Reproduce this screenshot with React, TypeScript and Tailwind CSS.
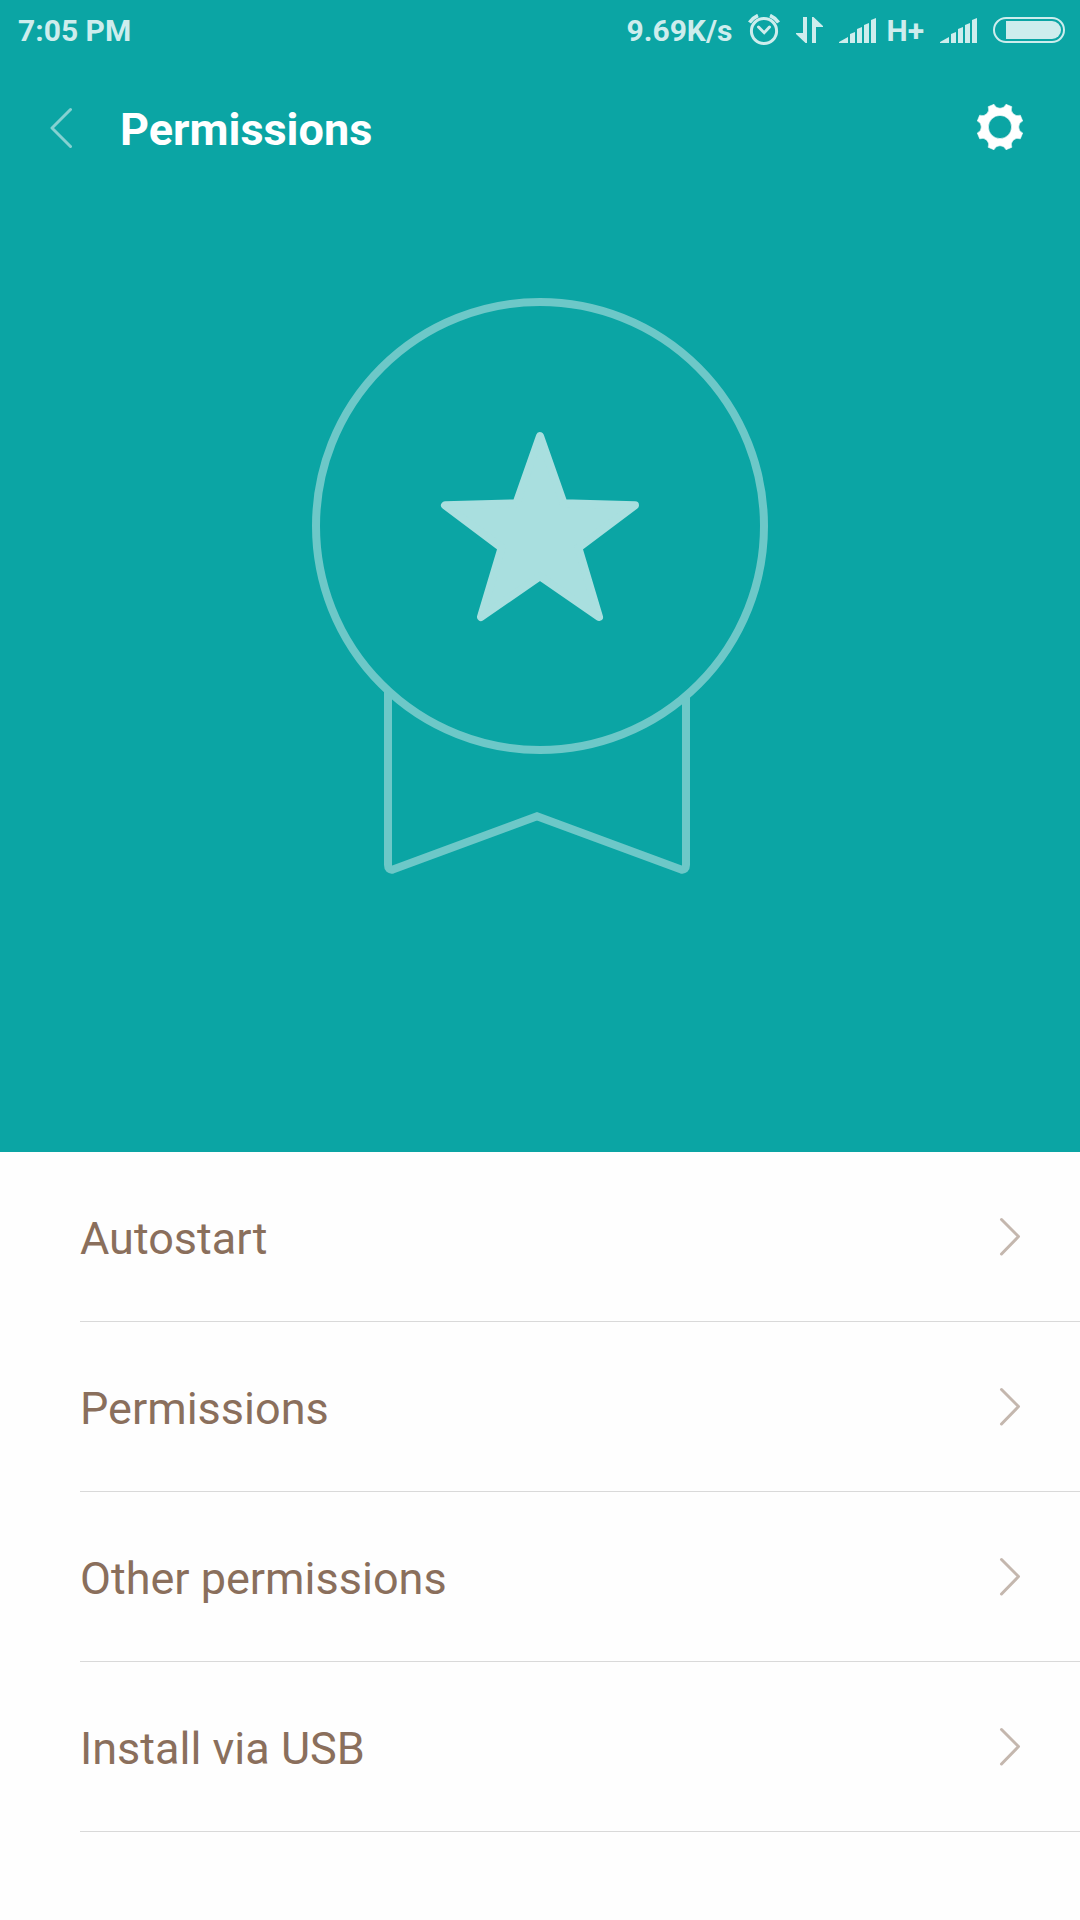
const menuItems = [
  { label: "Autostart", href: "#autostart" },
  { label: "Permissions", href: "#permissions" },
  { label: "Other permissions", href: "#other-permissions" },
  { label: "Install via USB", href: "#install-via-usb" },
];

function SignalIcon() {
  return (
    <svg width="37" height="26" viewBox="0 0 37 26" fill="currentColor" aria-hidden="true">
      <path d="M0 26v-1l9-5v6zM11 26v-9l5-2v11zM18 26V12l5-2v16zM25 26V8l5-2v20zM32 26V3l5-2v25z" />
    </svg>
  );
}

function AlarmIcon() {
  return (
    <svg
      width="32"
      height="32"
      viewBox="0 0 32 32"
      fill="none"
      stroke="currentColor"
      strokeWidth="3"
      aria-hidden="true"
    >
      <circle cx="16" cy="17" r="12.6" />
      <path d="M10.5 13l5.7 5.7 5.3-5.7" strokeLinecap="round" />
      <path d="M1.5 8.5A19 19 0 0 1 10 1.5M30.5 8.5A19 19 0 0 0 22 1.5" strokeWidth="3.6" />
    </svg>
  );
}

function DataIcon() {
  return (
    <svg width="27" height="26" viewBox="0 0 27 26" fill="currentColor" aria-hidden="true">
      <path d="M7 0h4v26H9.5L0 17v-1h7zM16 26h4V10h7V9L17.5 0H16z" />
    </svg>
  );
}

function BatteryIcon() {
  return (
    <svg width="72" height="26" viewBox="0 0 72 26" aria-hidden="true">
      <rect x="1" y="1" width="70" height="24" rx="12" fill="none" stroke="currentColor" strokeWidth="2" />
      <path d="M13 4h46a9 9 0 0 1 0 18H13z" fill="currentColor" />
    </svg>
  );
}

function StatusBar() {
  return (
    <div className="flex h-[60px] items-center justify-between pl-[18px] pr-[15px] text-[30px] leading-[36px] font-bold text-[#ceeded]">
      <span className="pt-0.5">7:05 PM</span>
      <div className="flex items-center gap-4">
        <span className="pt-0.5">9.69K/s</span>
        <AlarmIcon />
        <DataIcon />
        <div className="flex items-center gap-2.5">
          <SignalIcon />
          <span className="pt-0.5">H+</span>
        </div>
        <SignalIcon />
        <BatteryIcon />
      </div>
    </div>
  );
}

function BackIcon() {
  return (
    <svg width="24" height="42" viewBox="0 0 24 42" fill="none" aria-hidden="true">
      <path
        d="M22.5 2.5L4 21l18.5 18.5"
        stroke="#85d1d1"
        strokeWidth="3"
        strokeLinecap="round"
        strokeLinejoin="round"
      />
    </svg>
  );
}

function GearIcon() {
  return (
    <svg width="48" height="48" viewBox="-24 -23 48 48" fill="#fff" aria-hidden="true">
      <path
        fillRule="evenodd"
        d="M-6-22.7A6.5 6.5 0 0 0 6-22.7L11.8-20.3A6.5 6.5 0 0 0 20.3-11.8L22.7-6A6.5 6.5 0 0 0 22.7 6L20.3 11.8A6.5 6.5 0 0 0 11.8 20.3L6 22.7A6.5 6.5 0 0 0-6 22.7L-11.8 20.3A6.5 6.5 0 0 0-20.3 11.8L-22.7 6A6.5 6.5 0 0 0-22.7-6L-20.3-11.8A6.5 6.5 0 0 0-11.8-20.3ZM0-11.6A11.6 11.6 0 0 0 0 11.6A11.6 11.6 0 0 0 0-11.6Z"
        stroke="#fff"
        strokeWidth="0.6"
        strokeLinejoin="round"
      />
    </svg>
  );
}

function ChevronIcon() {
  return (
    <svg width="22" height="40" viewBox="0 0 22 40" fill="none" aria-hidden="true">
      <path
        d="M2.5 2.5l17 17-17 17.5"
        stroke="#c4b7ae"
        strokeWidth="3"
        strokeLinecap="round"
        strokeLinejoin="round"
      />
    </svg>
  );
}

function BadgeIllustration() {
  return (
    <svg width="456" height="576" viewBox="312 298 456 576" fill="none" aria-hidden="true">
      {/* Ribbon and medal */}
      <g stroke="#6dc8c8" strokeWidth="8">
        <circle cx="540" cy="526" r="224" />
        <path d="M388 691V865Q388 870.5 393 869.5L537 816.3L681 869.5Q686 870.5 686 865V696" />
      </g>
      {/* Star */}
      <path
        d="M540 436L563.6 503.3L635 505.3L578.4 547.8L599 617L540 576.2L481 617L501.6 547.8L445 505.3L516.4 503.3Z"
        fill="#a9dfdf"
        stroke="#a9dfdf"
        strokeWidth="8"
        strokeLinejoin="round"
      />
    </svg>
  );
}

export default function App() {
  return (
    <div className="min-h-screen bg-[#fefefe] font-['Roboto',sans-serif]">
      <header className="bg-[#0ba5a4]">
        <StatusBar />

        <div className="flex h-[136px] items-center pl-12 pr-14">
          <button type="button" aria-label="Back">
            <BackIcon />
          </button>
          <h1 className="ml-12 flex-1 pt-1 text-[45px] leading-[54px] font-bold text-white">
            Permissions
          </h1>
          <button type="button" aria-label="Settings">
            <GearIcon />
          </button>
        </div>

        <div className="flex justify-center pt-[102px] pb-[278px]">
          <BadgeIllustration />
        </div>
      </header>

      <nav className="pl-20">
        {menuItems.map((item) => (
          <a
            key={item.label}
            href={item.href}
            className="flex h-[170px] items-center justify-between border-b border-[#d9d9d9] pr-[59px] text-[45px] leading-[54px] text-[#8a6f5c]"
          >
            <span className="pt-1">{item.label}</span>
            <ChevronIcon />
          </a>
        ))}
      </nav>
    </div>
  );
}
